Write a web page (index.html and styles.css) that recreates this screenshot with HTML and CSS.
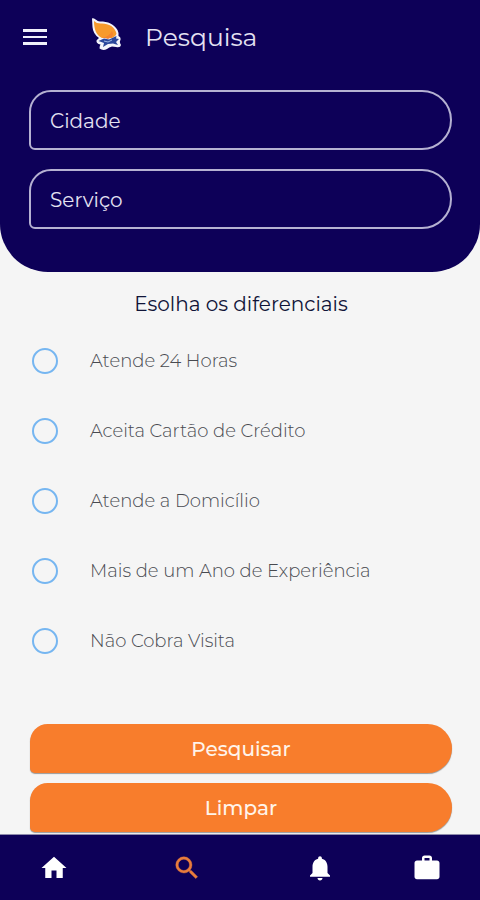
FILE: index.html
```html
<!DOCTYPE html>
<html lang="pt-BR">
<head>
<meta charset="utf-8">
<meta name="viewport" content="width=device-width, initial-scale=1">
<title>Pesquisa</title>
<link rel="stylesheet" href="styles.css">
</head>
<body>
<form class="screen">
  <header class="header">
    <div class="topbar">
      <button class="menu" type="button" aria-label="Menu">
        <svg viewBox="0 0 24 16" width="24" height="16" fill="currentColor"><path d="M0 0h24v3H0zM0 7h24v2H0zM0 13h24v3H0z"/></svg>
      </button>
      <svg class="logo" viewBox="0 0 34 34" width="34" height="34" aria-hidden="true">
        <path d="M2 1.500C4.500 0 6 4 10 4.500C18 4.500 24 7 27.500 13Q29 16 28.500 19Q31 20 30.500 23Q29 24.500 31 28Q30.500 31 26 30L22 29.500Q19 30 17 32Q13 34 9.500 31.500Q9.500 29 10.500 27.500Q6 26.500 6.500 23.500Q8 21.500 9 21Q3 17 2.500 10Z" fill="#f4f4fb"/>
        <path d="M4 4Q7 7 12 6.500C19 6.500 25 10 26.500 16.500Q26 19 22 21L12 21C6 18 4 12 4 4Z" fill="#f79a2c"/>
        <path d="M12 20Q18 21 22 14Q24 17 22 20L18 22Z" fill="#f4852f"/>
        <path d="M8.500 24L14 21.500L19 22.500L26.500 19L26 21.500L29 22L26 25L28 28L23 26.500L18 27L13 30L14 26Z" fill="#2b479b"/>
        <path d="M14 24L18 25L22 23" fill="none" stroke="#9cb5e4"/>
      </svg>
      <h1 class="title">Pesquisa</h1>
    </div>
    <div class="fields">
      <input class="field" type="text" placeholder="Cidade" aria-label="Cidade">
      <input class="field" type="text" placeholder="Serviço" aria-label="Serviço">
    </div>
  </header>
  <main class="main">
    <fieldset class="options">
      <legend class="heading">Esolha os diferenciais</legend>
      <label class="option"><input class="radio" type="radio" name="atende24"><span>Atende 24 Horas</span></label>
      <label class="option"><input class="radio" type="radio" name="cartao"><span>Aceita Cartão de Crédito</span></label>
      <label class="option"><input class="radio" type="radio" name="domicilio"><span>Atende a Domicílio</span></label>
      <label class="option"><input class="radio" type="radio" name="experiencia"><span>Mais de um Ano de Experiência</span></label>
      <label class="option"><input class="radio" type="radio" name="visita"><span>Não Cobra Visita</span></label>
    </fieldset>
    <div class="actions">
      <button class="action" type="submit">Pesquisar</button>
      <button class="action" type="reset">Limpar</button>
    </div>
  </main>
  <nav class="nav">
    <a class="tab" href="#inicio" aria-label="Início"><svg class="icon" viewBox="0 0 24 24"><path d="M10 20v-6h4v6h5v-8h3L12 3 2 12h3v8z"/></svg></a>
    <a class="tab tab-active" href="#pesquisa" aria-label="Pesquisa"><svg class="icon" viewBox="0 0 24 24"><path d="M15.5 14h-.79l-.28-.27A6.47 6.47 0 0 0 16 9.5 6.5 6.5 0 1 0 9.500 16c1.610 0 3.090-.59 4.230-1.570l.27.28v.79l5 4.990L20.490 19zm-6 0a4.500 4.500 0 1 1 0-9 4.500 4.500 0 0 1 0 9z"/></svg></a>
    <a class="tab" href="#avisos" aria-label="Notificações"><svg class="icon" viewBox="0 0 24 24"><path d="M12 22c1.100 0 2-.9 2-2h-4c0 1.100.89 2 2 2zm6-6v-5c0-3.070-1.640-5.640-4.500-6.320V4c0-.83-.67-1.500-1.500-1.500s-1.500.67-1.500 1.500v.68C7.630 5.360 6 7.920 6 11v5l-2 2v1h16v-1z"/></svg></a>
    <a class="tab" href="#servicos" aria-label="Serviços"><svg class="icon" viewBox="0 0 24 24"><path d="M20 6h-4V4c0-1.110-.89-2-2-2h-4c-1.110 0-2 .89-2 2v2H4c-1.110 0-1.990.89-1.990 2L2 19c0 1.110.89 2 2 2h16c1.110 0 2-.89 2-2V8c0-1.110-.89-2-2-2zm-6 0h-4V4h4z"/></svg></a>
  </nav>
</form>
</body>
</html>
```
FILE: styles.css
```css
* {
  box-sizing: border-box;
}

body {
  margin: 0;
  background: #f5f5f5;
  font-family: Montserrat, Inter, "Open Sans", sans-serif;
}

.screen {
  display: flex;
  flex-direction: column;
  min-height: 100vh;
}

.header {
  padding: 0 28px 43px 29px;
  background: #0d0058;
  border-radius: 0 0 48px 48px;
}

.topbar {
  display: flex;
  align-items: center;
  height: 74px;
  margin-bottom: 16px;
}

.menu {
  display: flex;
  margin: 0 43px 0 -6px;
  padding: 0;
  border: 0;
  background: none;
  color: #f0f0fa;
}

.logo {
  margin-bottom: 6px;
}

.title {
  margin: 0 0 0 21px;
  color: #e4e2f2;
  font-size: 25px;
  font-weight: 400;
}

.fields {
  display: grid;
  gap: 19px;
}

.field {
  width: 100%;
  height: 60px;
  padding: 2px 19px 0;
  border: 2px solid #b5b1d2;
  border-radius: 22px 30px 30px 6px;
  background: none;
  color: #e4e2f2;
  font: inherit;
  font-size: 20px;
}

.field::placeholder {
  color: #e4e2f2;
  opacity: 1;
}

.main {
  flex: 1;
  padding: 16px 28px 2px 30px;
}

.options {
  min-width: 0;
  margin: 0;
  padding: 0;
  border: 0;
}

.heading {
  width: 100%;
  padding: 0;
  margin-bottom: 6px;
  color: #101438;
  font-size: 20px;
  line-height: 32px;
  text-align: center;
}

.option {
  display: flex;
  align-items: center;
  gap: 32px;
  height: 70px;
  padding-left: 2px;
  color: #484a50;
  font-size: 18px;
  font-weight: 300;
}

.radio {
  appearance: none;
  flex: none;
  width: 26px;
  height: 26px;
  margin: 0;
  border: 2px solid #76b6f1;
  border-radius: 50%;
}

.radio:checked {
  background: #76b6f1;
  box-shadow: inset 0 0 0 4px #f5f5f5;
}

.actions {
  display: grid;
  gap: 10px;
  margin-top: 48px;
}

.action {
  height: 49px;
  border: 0;
  border-radius: 18px 25px 25px 5px;
  background: #f87d2c;
  box-shadow: 0 1px 1px #9a9a9a;
  color: #fff4ea;
  font: inherit;
  font-size: 20px;
  font-weight: 500;
}

.nav {
  position: sticky;
  bottom: 0;
  display: flex;
  height: 66px;
  padding-left: 1px;
  border-top: 1px solid #8f8bab;
  background: #0d0058;
}

.tab {
  display: flex;
  flex: 2;
  align-items: center;
  justify-content: center;
  color: #fff;
}

.tab-active {
  flex: 3;
  color: #e97c3c;
}

.icon {
  width: 30px;
  height: 30px;
  fill: currentColor;
}

.tab-active .icon {
  stroke: currentColor;
  stroke-width: 0.3px;
}
```
